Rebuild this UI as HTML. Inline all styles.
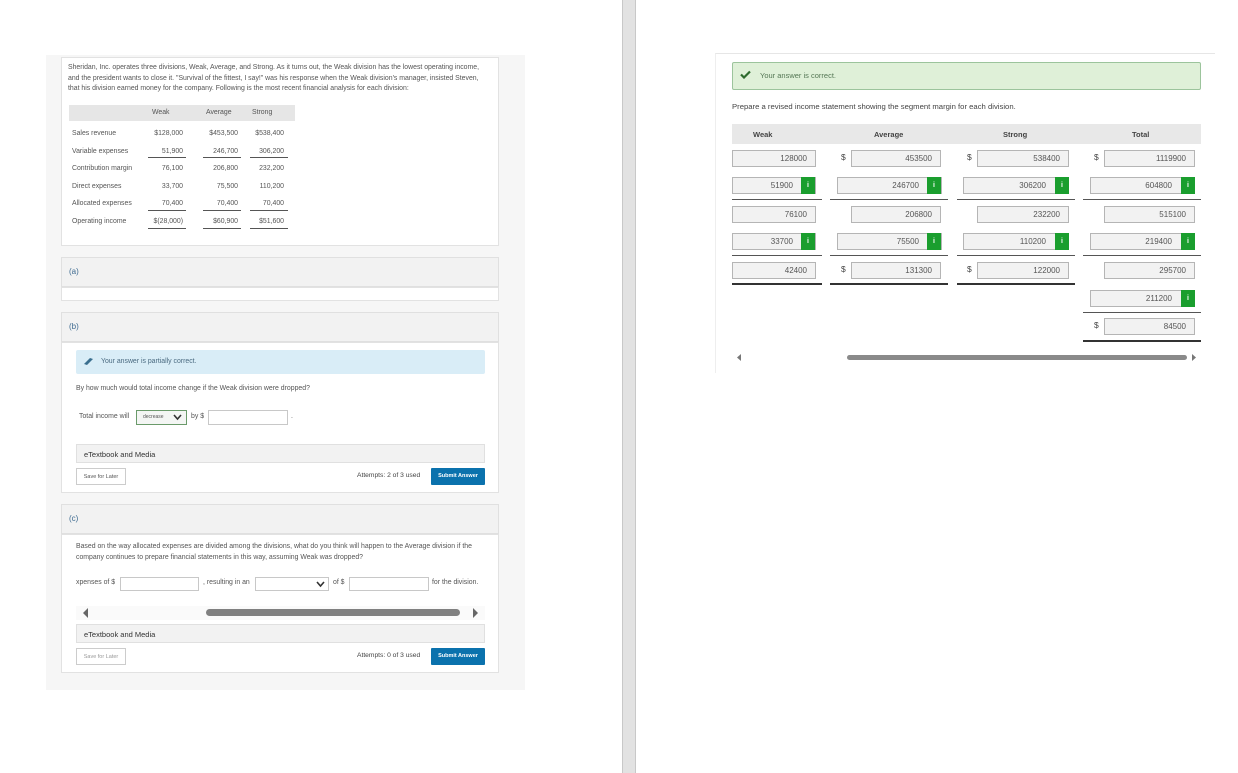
<!DOCTYPE html>
<html><head><meta charset="utf-8">
<style>
*{box-sizing:border-box;margin:0;padding:0}
body{width:1238px;height:773px;background:#fff;position:relative;overflow:hidden;font-family:"Liberation Sans",sans-serif;color:#333}
.a{position:absolute}
.s{font-size:6.9px;color:#555;white-space:nowrap}
.wb{background:#fff;border:1px solid #e2e2e2}
.hd{background:#f2f2f2;border:1px solid #e0e0e0;font-size:8px;color:#3d6a90;padding:9px 0 0 7px}
.inp{background:#fff;border:1px solid #c8c8c8}
.btn{background:#fff;border:1px solid #ccc;font-size:5.5px;color:#555;text-align:center;line-height:16px}
.sub{background:#0b72ad;color:#fff;font-size:5.5px;font-weight:bold;text-align:center;line-height:17px;border-radius:1px}
.etb{background:#f2f2f2;border:1px solid #e0e0e0;font-size:7.5px;color:#333;padding:5px 0 0 7px}
.r{text-align:right}
.ri{background:#f2f2f2;border:1px solid #b5b5b5;font-size:8px;color:#555;text-align:right;padding-right:8px;line-height:15px;height:17px}
.gi{background:#1a9e2e;color:#fff;font-size:7px;font-weight:bold;text-align:center;line-height:17px;width:14px;height:17px}
.dl{font-size:8.5px;color:#444}
.ul{height:1px;background:#555}
.ut{height:2px;background:#333}
</style></head><body>
<div class="a" style="left:46px;top:55px;width:479px;height:635px;background:#f6f6f6"></div>
<div class="a" style="left:622px;top:0;width:14px;height:773px;background:#e2e2e2;border-left:1px solid #c8c8c8;border-right:1px solid #c8c8c8"></div>

<div class="a wb" style="left:61px;top:57px;width:438px;height:189px"></div>
<div class="a s" style="left:68px;top:63px;line-height:10.5px">Sheridan, Inc. operates three divisions, Weak, Average, and Strong. As it turns out, the Weak division has the lowest operating income,<br>and the president wants to close it. "Survival of the fittest, I say!" was his response when the Weak division's manager, insisted Steven,<br>that his division earned money for the company. Following is the most recent financial analysis for each division:</div>
<div class="a" style="left:69px;top:105px;width:226px;height:16px;background:#e6e6e6"></div>
<div class="a s" style="left:152px;top:109px">Weak</div>
<div class="a s" style="left:206px;top:109px">Average</div>
<div class="a s" style="left:252px;top:109px">Strong</div>
<div class="a s" style="left:72px;top:125px;line-height:17.6px">Sales revenue<br>Variable expenses<br>Contribution margin<br>Direct expenses<br>Allocated expenses<br>Operating income</div>
<div class="a s r" style="left:146px;top:125px;width:37px;line-height:17.6px">$128,000<br>51,900<br>76,100<br>33,700<br>70,400<br>$(28,000)</div>
<div class="a s r" style="left:198px;top:125px;width:40px;line-height:17.6px">$453,500<br>246,700<br>206,800<br>75,500<br>70,400<br>$60,900</div>
<div class="a s r" style="left:244px;top:125px;width:40px;line-height:17.6px">$538,400<br>306,200<br>232,200<br>110,200<br>70,400<br>$51,600</div>
<div class="a ul" style="left:148px;top:157px;width:38px"></div><div class="a ul" style="left:203px;top:157px;width:38px"></div><div class="a ul" style="left:250px;top:157px;width:38px"></div>
<div class="a ul" style="left:148px;top:210px;width:38px"></div><div class="a ul" style="left:203px;top:210px;width:38px"></div><div class="a ul" style="left:250px;top:210px;width:38px"></div>
<div class="a ul" style="left:148px;top:228px;width:38px"></div><div class="a ul" style="left:203px;top:228px;width:38px"></div><div class="a ul" style="left:250px;top:228px;width:38px"></div>

<div class="a hd" style="left:61px;top:257px;width:438px;height:30px">(a)</div>
<div class="a wb" style="left:61px;top:287px;width:438px;height:14px"></div>

<div class="a hd" style="left:61px;top:312px;width:438px;height:30px">(b)</div>
<div class="a wb" style="left:61px;top:342px;width:438px;height:151px"></div>
<div class="a" style="left:76px;top:350px;width:409px;height:24px;background:#d9edf7;border-radius:2px"></div>
<svg class="a" style="left:82px;top:356px" width="12" height="10"><path d="M2 8 L8 2 L11 3 L5 9 Z" fill="#3a6f8f"/></svg>
<div class="a s" style="left:101px;top:358px;color:#4a6a80">Your answer is partially correct.</div>
<div class="a s" style="left:76px;top:385px">By how much would total income change if the Weak division were dropped?</div>
<div class="a s" style="left:79px;top:413px">Total income will</div>
<div class="a" style="left:136px;top:410px;width:51px;height:15px;border:1px solid #6a9a6a;background:#f4f6f4"></div>
<div class="a" style="left:143px;top:414px;font-size:5px;color:#555">decrease</div>
<svg class="a" style="left:173px;top:414px" width="9" height="7"><path d="M1 1 L4.5 5 L8 1" stroke="#333" stroke-width="1.6" fill="none"/></svg>
<div class="a s" style="left:191px;top:413px">by $</div>
<div class="a inp" style="left:208px;top:410px;width:80px;height:15px"></div>
<div class="a s" style="left:291px;top:413px">.</div>
<div class="a etb" style="left:76px;top:444px;width:409px;height:19px">eTextbook and Media</div>
<div class="a btn" style="left:76px;top:468px;width:50px;height:17px">Save for Later</div>
<div class="a" style="left:357px;top:472px;font-size:6.7px;color:#444">Attempts: 2 of 3 used</div>
<div class="a sub" style="left:431px;top:468px;width:54px;height:17px">Submit Answer</div>

<div class="a hd" style="left:61px;top:504px;width:438px;height:30px">(c)</div>
<div class="a wb" style="left:61px;top:534px;width:438px;height:139px"></div>
<div class="a s" style="left:76px;top:542px;line-height:10.5px">Based on the way allocated expenses are divided among the divisions, what do you think will happen to the Average division if the<br>company continues to prepare financial statements in this way, assuming Weak was dropped?</div>
<div class="a s" style="left:76px;top:579px">xpenses of $</div>
<div class="a inp" style="left:120px;top:577px;width:79px;height:14px"></div>
<div class="a s" style="left:203px;top:579px">, resulting in an</div>
<div class="a inp" style="left:255px;top:577px;width:74px;height:14px"></div>
<svg class="a" style="left:316px;top:581px" width="9" height="7"><path d="M1 1 L4.5 5 L8 1" stroke="#333" stroke-width="1.6" fill="none"/></svg>
<div class="a s" style="left:333px;top:579px">of $</div>
<div class="a inp" style="left:349px;top:577px;width:80px;height:14px"></div>
<div class="a s" style="left:432px;top:579px">for the division.</div>
<div class="a" style="left:76px;top:606px;width:409px;height:14px;background:#fafafa"></div>
<svg class="a" style="left:83px;top:608px" width="6" height="10"><path d="M5 0 L0 5 L5 10Z" fill="#666"/></svg>
<div class="a" style="left:206px;top:609px;width:254px;height:7px;background:#808080;border-radius:4px"></div>
<svg class="a" style="left:473px;top:608px" width="6" height="10"><path d="M0 0 L5 5 L0 10Z" fill="#666"/></svg>
<div class="a etb" style="left:76px;top:624px;width:409px;height:19px">eTextbook and Media</div>
<div class="a btn" style="left:76px;top:648px;width:50px;height:17px;color:#999">Save for Later</div>
<div class="a" style="left:357px;top:652px;font-size:6.7px;color:#444">Attempts: 0 of 3 used</div>
<div class="a sub" style="left:431px;top:648px;width:54px;height:17px">Submit Answer</div>

<div class="a" style="left:715px;top:53px;width:500px;height:320px;border-top:1px solid #e6e6e6;border-left:1px solid #eee"></div>
<div class="a" style="left:732px;top:62px;width:469px;height:28px;background:#dff0d8;border:1px solid #9cc49c;border-radius:2px"></div>
<svg class="a" style="left:740px;top:70px" width="11" height="9"><path d="M1 4.5 L4 7.5 L10 1.5" stroke="#2e6b2e" stroke-width="2.2" fill="none"/></svg>
<div class="a" style="left:760px;top:71px;font-size:7.5px;color:#557755">Your answer is correct.</div>
<div class="a" style="left:732px;top:102px;font-size:7.7px;color:#444">Prepare a revised income statement showing the segment margin for each division.</div>
<div class="a" style="left:732px;top:124px;width:469px;height:20px;background:#e8e8e8"></div>
<div class="a" style="left:753px;top:130px;font-size:7.5px;font-weight:bold;color:#444">Weak</div>
<div class="a" style="left:874px;top:130px;font-size:7.5px;font-weight:bold;color:#444">Average</div>
<div class="a" style="left:1003px;top:130px;font-size:7.5px;font-weight:bold;color:#444">Strong</div>
<div class="a" style="left:1132px;top:130px;font-size:7.5px;font-weight:bold;color:#444">Total</div>

<div class="a ri" style="left:732px;top:150px;width:84px">128000</div>
<div class="a dl" style="left:841px;top:152px">$</div><div class="a ri" style="left:851px;top:150px;width:90px">453500</div>
<div class="a dl" style="left:967px;top:152px">$</div><div class="a ri" style="left:977px;top:150px;width:92px">538400</div>
<div class="a dl" style="left:1094px;top:152px">$</div><div class="a ri" style="left:1104px;top:150px;width:91px">1119900</div>
<div class="a ri" style="left:732px;top:177px;width:84px;padding-right:22px">51900</div><div class="a gi" style="left:801px;top:177px">i</div>
<div class="a ri" style="left:837px;top:177px;width:105px;padding-right:22px">246700</div><div class="a gi" style="left:927px;top:177px">i</div>
<div class="a ri" style="left:963px;top:177px;width:106px;padding-right:22px">306200</div><div class="a gi" style="left:1055px;top:177px">i</div>
<div class="a ri" style="left:1090px;top:177px;width:105px;padding-right:22px">604800</div><div class="a gi" style="left:1181px;top:177px">i</div>
<div class="a ul" style="left:732px;top:199px;width:90px"></div><div class="a ul" style="left:830px;top:199px;width:118px"></div><div class="a ul" style="left:957px;top:199px;width:118px"></div><div class="a ul" style="left:1083px;top:199px;width:118px"></div>
<div class="a ri" style="left:732px;top:206px;width:84px">76100</div>
<div class="a ri" style="left:851px;top:206px;width:90px">206800</div>
<div class="a ri" style="left:977px;top:206px;width:92px">232200</div>
<div class="a ri" style="left:1104px;top:206px;width:91px">515100</div>
<div class="a ri" style="left:732px;top:233px;width:84px;padding-right:22px">33700</div><div class="a gi" style="left:801px;top:233px">i</div>
<div class="a ri" style="left:837px;top:233px;width:105px;padding-right:22px">75500</div><div class="a gi" style="left:927px;top:233px">i</div>
<div class="a ri" style="left:963px;top:233px;width:106px;padding-right:22px">110200</div><div class="a gi" style="left:1055px;top:233px">i</div>
<div class="a ri" style="left:1090px;top:233px;width:105px;padding-right:22px">219400</div><div class="a gi" style="left:1181px;top:233px">i</div>
<div class="a ul" style="left:732px;top:255px;width:90px"></div><div class="a ul" style="left:830px;top:255px;width:118px"></div><div class="a ul" style="left:957px;top:255px;width:118px"></div><div class="a ul" style="left:1083px;top:255px;width:118px"></div>
<div class="a ri" style="left:732px;top:262px;width:84px">42400</div>
<div class="a dl" style="left:841px;top:264px">$</div><div class="a ri" style="left:851px;top:262px;width:90px">131300</div>
<div class="a dl" style="left:967px;top:264px">$</div><div class="a ri" style="left:977px;top:262px;width:92px">122000</div>
<div class="a ri" style="left:1104px;top:262px;width:91px">295700</div>
<div class="a ut" style="left:732px;top:283px;width:90px"></div><div class="a ut" style="left:830px;top:283px;width:118px"></div><div class="a ut" style="left:957px;top:283px;width:118px"></div>
<div class="a ri" style="left:1090px;top:290px;width:105px;padding-right:22px">211200</div><div class="a gi" style="left:1181px;top:290px">i</div>
<div class="a ul" style="left:1083px;top:312px;width:118px"></div>
<div class="a dl" style="left:1094px;top:320px">$</div><div class="a ri" style="left:1104px;top:318px;width:91px">84500</div>
<div class="a ut" style="left:1083px;top:340px;width:118px"></div>
<svg class="a" style="left:737px;top:354px" width="4" height="7"><path d="M4 0 L0 3.5 L4 7Z" fill="#777"/></svg>
<div class="a" style="left:847px;top:355px;width:340px;height:5px;background:#8a8a8a;border-radius:3px"></div>
<svg class="a" style="left:1192px;top:354px" width="4" height="7"><path d="M0 0 L4 3.5 L0 7Z" fill="#777"/></svg>
</body></html>
